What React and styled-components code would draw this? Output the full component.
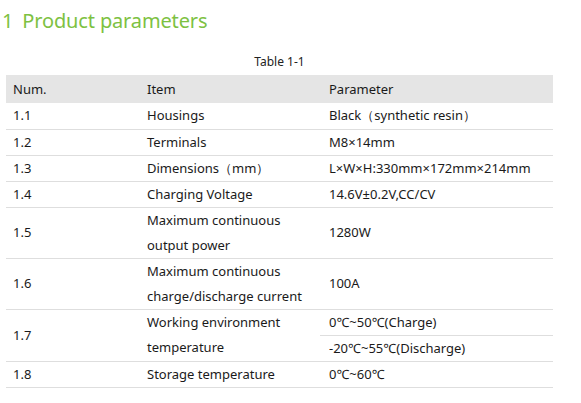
import styled, { createGlobalStyle } from 'styled-components';

const GlobalStyle = createGlobalStyle`
  body {
    margin: 0;
    background: #ffffff;
    font-family: "Noto Sans", "Open Sans", sans-serif;
    color: #1a1a1a;
  }
  * {
    box-sizing: border-box;
  }
`;

const Page = styled.div`
  width: 581px;
  height: 403px;
  padding: 7px 0 0 6px;
  overflow: hidden;
`;

const Title = styled.h1`
  margin: 0 0 0 -4px;
  font-size: 20px;
  font-weight: 400;
  line-height: 28px;
  color: #7dc142;
  letter-spacing: -0.15px;
`;

const TitleNum = styled.span`
  margin-right: 4px;
`;

const Caption = styled.div`
  width: 547px;
  margin-top: 19px;
  text-align: center;
  font-size: 12px;
  line-height: 16px;
  color: #222;
`;

const Table = styled.table`
  width: 547px;
  margin-top: 5px;
  border-collapse: collapse;
  table-layout: fixed;
  font-size: 13px;
  color: #1a1a1a;
`;

const HeadRow = styled.tr`
  background: #e5e5e5;
  height: 28px;
`;

const Th = styled.th`
  text-align: left;
  font-weight: 400;
  padding: 0 0 0 ${(p) => p.$pad || 7}px;
  width: ${(p) => p.$w}px;
`;

const Row = styled.tr`
  height: ${(p) => p.$h || 26}px;
`;

const Td = styled.td`
  padding: 0 0 0 ${(p) => p.$pad || 7}px;
  border-bottom: 1px solid #dedede;
  line-height: 25px;
  vertical-align: middle;
  white-space: nowrap;
`;

const rows = [
  ['1.1', 'Housings', 'Black（synthetic resin）'],
  ['1.2', 'Terminals', 'M8×14mm'],
  ['1.3', 'Dimensions（mm）', 'L×W×H:330mm×172mm×214mm'],
  ['1.4', 'Charging Voltage', '14.6V±0.2V,CC/CV'],
  ['1.5', ['Maximum continuous', 'output power'], '1280W'],
  ['1.6', ['Maximum continuous', 'charge/discharge current'], '100A'],
];

function ItemText({ value }) {
  if (Array.isArray(value)) {
    return (
      <>
        {value[0]}
        <br />
        {value[1]}
      </>
    );
  }
  return value;
}

export default function App() {
  return (
    <>
      <GlobalStyle />
      <Page>
        <Title>
          <TitleNum>1</TitleNum> Product parameters
        </Title>
        <Caption>Table 1-1</Caption>
        <Table>
          <thead>
            <HeadRow>
              <Th $w={134}>Num.</Th>
              <Th $w={180}>Item</Th>
              <Th $w={233} $pad={9}>Parameter</Th>
            </HeadRow>
          </thead>
          <tbody>
            {rows.map(([num, item, param]) => (
              <Row key={num} $h={Array.isArray(item) ? 51 : 26}>
                <Td>{num}</Td>
                <Td>
                  <ItemText value={item} />
                </Td>
                <Td $pad={9}>{param}</Td>
              </Row>
            ))}
            <Row $h={26}>
              <Td rowSpan={2}>1.7</Td>
              <Td rowSpan={2}>
                Working environment
                <br />
                temperature
              </Td>
              <Td $pad={9}>0℃~50℃(Charge)</Td>
            </Row>
            <Row $h={26}>
              <Td $pad={9}>-20℃~55℃(Discharge)</Td>
            </Row>
            <Row $h={26}>
              <Td>1.8</Td>
              <Td>Storage temperature</Td>
              <Td $pad={9}>0℃~60℃</Td>
            </Row>
          </tbody>
        </Table>
      </Page>
    </>
  );
}
